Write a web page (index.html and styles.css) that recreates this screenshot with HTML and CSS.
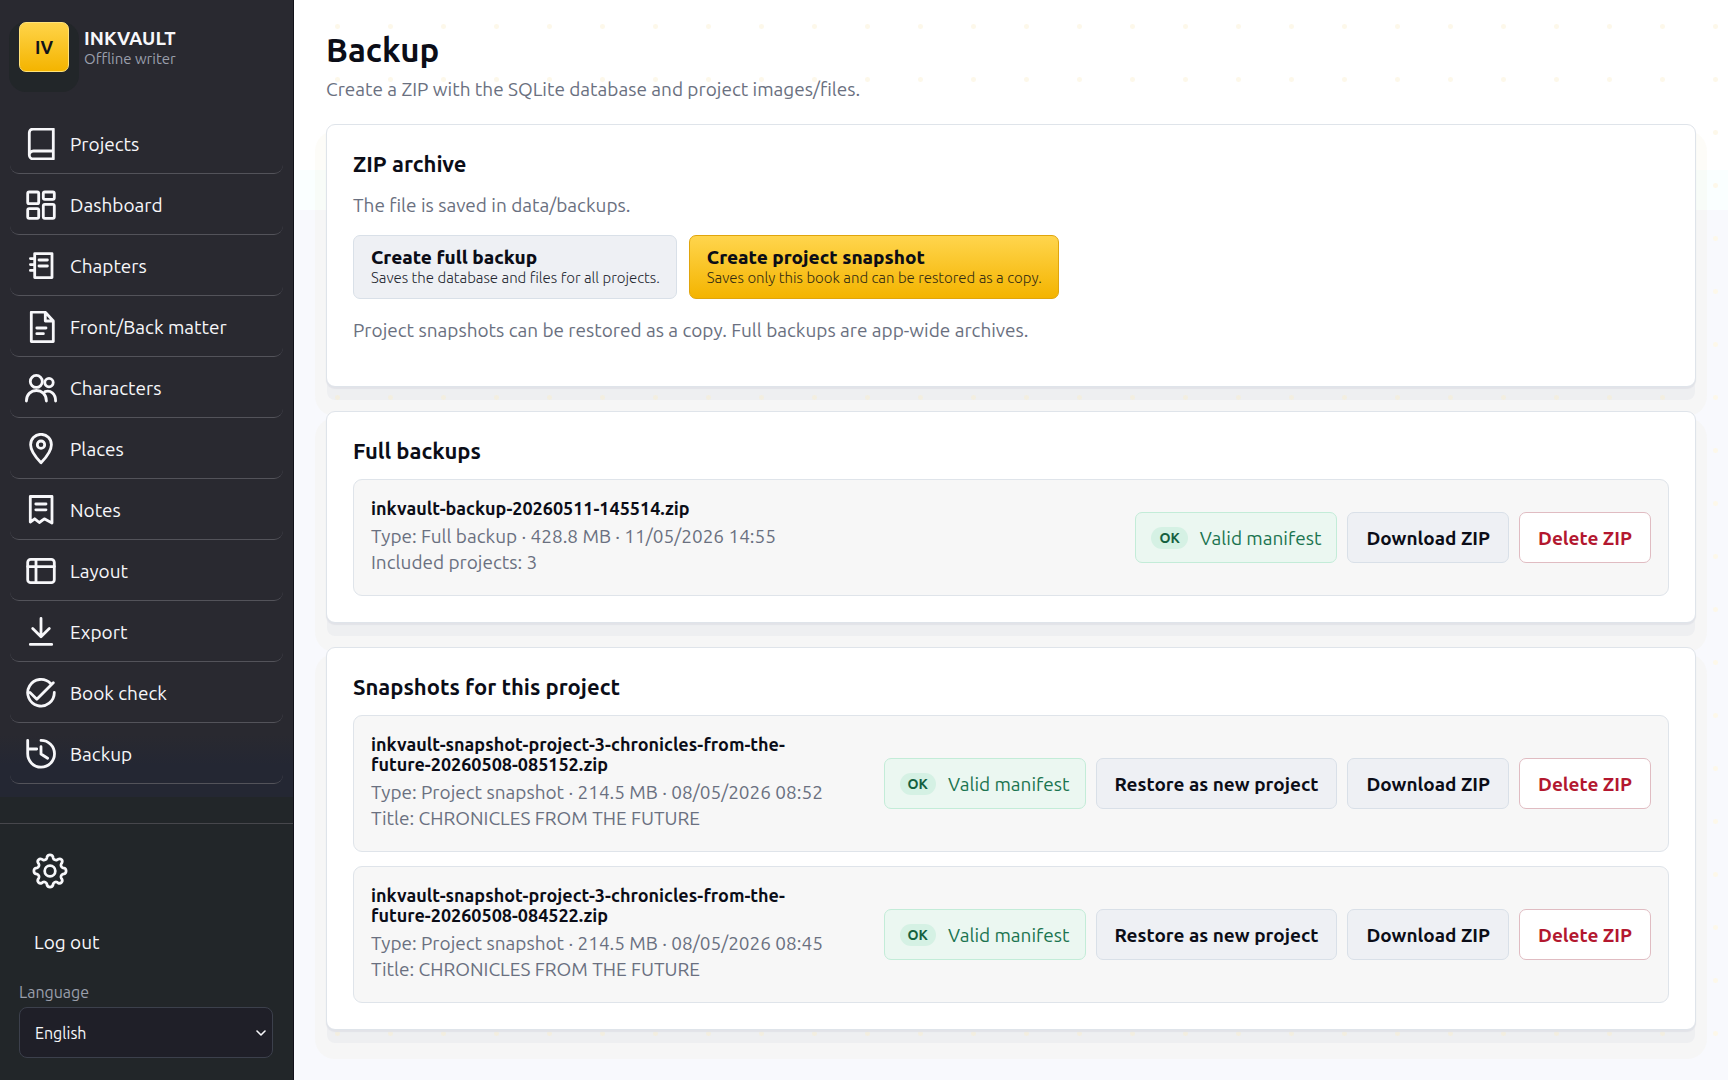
FILE: index.html
```html
<!DOCTYPE html>
<html lang="en">
<head>
<meta charset="utf-8">
<meta name="viewport" content="width=device-width, initial-scale=1">
<title>Backup · INKVAULT</title>
<link rel="stylesheet" href="styles.css">
</head>
<body>
<div class="app">
  <aside class="sidebar">
    <div class="brand">
      <span class="brand-mark">IV</span>
      <span class="brand-text"><strong>INKVAULT</strong><span>Offline writer</span></span>
    </div>
    <nav class="nav" aria-label="Main">
      <a href="#projects"><svg viewBox="0 0 32 32"><path d="M28.3 1H8a3.7 3.7 0 0 0-3.7 3.7V27a4 4 0 0 0 4 4h20zM4.3 27a4 4 0 0 1 4-4h20"/></svg>Projects</a>
      <a href="#dashboard"><svg viewBox="0 0 32 32"><rect x="2.7" y="3" width="11" height="11.7" rx="1.5"/><rect x="18.3" y="3" width="11" height="7.3" rx="1.5"/><rect x="2.7" y="19.7" width="11" height="9.6" rx="1.5"/><rect x="18.3" y="15.3" width="11" height="14" rx="1.5"/></svg>Dashboard</a>
      <a href="#chapters"><svg viewBox="0 0 32 32"><path d="M9.7 3.6H27v24H9.7zM5.4 8.6h4.3M5.4 14.6h4.3M5.4 20.4h4.3M14 10h8.4M14 16h8.4"/></svg>Chapters</a>
      <a href="#matter"><svg viewBox="0 0 32 32"><path d="M6.3 1.2h14l8 8.8v20.6h-22zM20.3 1.2V10h8M11.8 17H21M11.8 22.7h6.6"/></svg>Front/Back matter</a>
      <a href="#characters"><svg viewBox="0 0 32 32"><circle cx="11.3" cy="9.4" r="6"/><circle cx="24" cy="10.6" r="4.2"/><path d="M1.4 29c0-14 20-14 20 0M20 19.6c5.5-1.6 10.6 2 10.6 9.4"/></svg>Characters</a>
      <a href="#places"><svg viewBox="0 0 32 32"><path d="M16 29.8C9 22.5 5.6 17 5.6 11.7a10.4 10.4 0 0 1 20.8 0C26.4 17 23 22.5 16 29.8z"/><circle cx="16" cy="11.7" r="3.7"/></svg>Places</a>
      <a href="#notes"><svg viewBox="0 0 32 32"><path d="M5.3 2.5H27V29l-7.7-4.2-5 3.7-4.6-3.7L5.3 28zM10.8 10H21M10.8 15.8H21"/></svg>Notes</a>
      <a href="#layout"><svg viewBox="0 0 32 32"><rect x="2.7" y="4.3" width="26.6" height="23.4" rx="3"/><path d="M2.7 11.6h26.6M11 4.3v23.4"/></svg>Layout</a>
      <a href="#export"><svg viewBox="0 0 32 32"><path d="M16 2.4v18.4M7.7 12.6l8.3 8.2 8.3-8.2M5.3 28.4h21.4"/></svg>Export</a>
      <a href="#check"><svg viewBox="0 0 32 32"><path d="M29.3 15.5A13.3 13.3 0 1 1 25.6 6.5M5 15.6l6.8 6.6L28.3 5.7"/></svg>Book check</a>
      <a href="#backup" aria-current="page"><svg viewBox="0 0 32 32"><path d="M16 2.4A13.4 13.4 0 1 1 2.7 15.6V2.4M2.7 11h9M16 8.7V16l6.6 4.2"/></svg>Backup</a>
    </nav>
    <div class="sidebar-foot">
      <a class="gear" href="#settings" aria-label="Settings"><svg viewBox="0 0 16 16"><circle cx="8" cy="8" r="2.5"/><path d="M9.4 1.4c-.4-1.3-2.4-1.3-2.8 0l-.1.5a1.33 1.33 0 0 1-1.9.8l-.4-.2c-1.2-.7-2.4.6-1.8 1.7l.3.4a1.33 1.33 0 0 1-.8 1.9l-.5.1c-1.3.4-1.3 2.4 0 2.8l.5.1a1.33 1.33 0 0 1 .8 1.9l-.3.4c-.6 1.2.6 2.4 1.8 1.8l.4-.3a1.33 1.33 0 0 1 1.9.8l.1.5c.4 1.3 2.4 1.3 2.8 0l.1-.5a1.33 1.33 0 0 1 1.9-.8l.4.3c1.2.6 2.4-.6 1.8-1.8l-.3-.4a1.33 1.33 0 0 1 .8-1.9l.5-.1c1.3-.4 1.3-2.4 0-2.8l-.5-.1a1.33 1.33 0 0 1-.8-1.9l.3-.4c.6-1.2-.6-2.4-1.8-1.7l-.4.2a1.33 1.33 0 0 1-1.9-.8z"/></svg></a>
      <button class="logout" type="button">Log out</button>
      <label for="language">Language</label>
      <div class="select">
        <select id="language"><option>English</option></select>
        <svg viewBox="0 0 10 8"><path d="M1 2l4 4 4-4"/></svg>
      </div>
    </div>
  </aside>

  <main class="main">
    <header class="page-head">
      <h1>Backup</h1>
      <p>Create a ZIP with the SQLite database and project images/files.</p>
    </header>

    <section class="card">
      <h2>ZIP archive</h2>
      <p>The file is saved in data/backups.</p>
      <div class="create">
        <button class="btn btn-tall" type="button"><strong>Create full backup</strong><span>Saves the database and files for all projects.</span></button>
        <button class="btn btn-tall btn-gold" type="button"><strong>Create project snapshot</strong><span>Saves only this book and can be restored as a copy.</span></button>
      </div>
      <p class="hint">Project snapshots can be restored as a copy. Full backups are app-wide archives.</p>
    </section>

    <section class="card">
      <h2>Full backups</h2>
      <article class="row">
        <div class="info">
          <h3>inkvault-backup-20260511-145514.zip</h3>
          <p>Type: Full backup · 428.8 MB · 11/05/2026 14:55</p>
          <p>Included projects: 3</p>
        </div>
        <div class="actions">
          <span class="valid"><b>OK</b>Valid manifest</span>
          <a class="btn" href="#download">Download ZIP</a>
          <button class="btn btn-danger" type="button">Delete ZIP</button>
        </div>
      </article>
    </section>

    <section class="card">
      <h2>Snapshots for this project</h2>
      <div class="rows">
        <article class="row">
          <div class="info">
            <h3>inkvault-snapshot-project-3-chronicles-from-the-future-20260508-085152.zip</h3>
            <p>Type: Project snapshot · 214.5 MB · 08/05/2026 08:52</p>
            <p>Title: CHRONICLES FROM THE FUTURE</p>
          </div>
          <div class="actions">
            <span class="valid"><b>OK</b>Valid manifest</span>
            <button class="btn" type="button">Restore as new project</button>
            <a class="btn" href="#download">Download ZIP</a>
            <button class="btn btn-danger" type="button">Delete ZIP</button>
          </div>
        </article>
        <article class="row">
          <div class="info">
            <h3>inkvault-snapshot-project-3-chronicles-from-the-future-20260508-084522.zip</h3>
            <p>Type: Project snapshot · 214.5 MB · 08/05/2026 08:45</p>
            <p>Title: CHRONICLES FROM THE FUTURE</p>
          </div>
          <div class="actions">
            <span class="valid"><b>OK</b>Valid manifest</span>
            <button class="btn" type="button">Restore as new project</button>
            <a class="btn" href="#download">Download ZIP</a>
            <button class="btn btn-danger" type="button">Delete ZIP</button>
          </div>
        </article>
      </div>
    </section>
  </main>
</div>
</body>
</html>
```
FILE: styles.css
```css
* { box-sizing: border-box; }

body {
  margin: 0;
  font: 400 19px/26px Ubuntu, "Open Sans", sans-serif;
  color: #0b0d17;
}

h1, h2, h3, p { margin: 0; }
a { color: inherit; text-decoration: none; }
button, select { font: inherit; color: inherit; cursor: pointer; }
svg { fill: none; stroke: currentColor; stroke-linecap: round; stroke-linejoin: round; flex: none; }

.app {
  display: grid;
  grid-template-columns: 294px 1fr;
  min-height: 100vh;
}

/* Sidebar */
.sidebar {
  display: flex;
  flex-direction: column;
  color: #f7f7fa;
  background: linear-gradient(#292930 0 735px, #242733 765px 797px, #222629 797px);
  border-right: 1px solid #12121a;
  box-shadow: 1px 0 0 #b9b9be;
}

.brand {
  display: flex;
  align-items: center;
  gap: 15px;
  padding: 22px 19px;
}
.brand-mark {
  display: grid;
  place-items: center;
  width: 50px;
  height: 50px;
  border-radius: 7px;
  border: 1px solid #ffe27a;
  background: linear-gradient(#ffd449, #f4b400);
  color: #12121a;
  font-weight: 700;
  font-size: 18px;
  box-shadow: 0 10px 0 10px #222629;
}
.brand-text { display: flex; flex-direction: column; padding-top: 2px; line-height: 21px; }
.brand-text span { font-size: 15px; color: #9a9fac; line-height: 20px; }

.nav {
  display: flex;
  flex-direction: column;
  gap: 1px;
  padding: 20px 10px 0;
}
.nav a {
  display: flex;
  align-items: center;
  gap: 13px;
  height: 60px;
  padding: 0 15px;
  border-bottom: 1px solid #53535a;
  border-radius: 9px;
}
.nav svg { width: 32px; height: 32px; stroke-width: 2.8; }

.sidebar-foot {
  display: flex;
  flex-direction: column;
  margin-top: auto;
  padding: 23px 20px 22px 19px;
  border-top: 1px solid #47474c;
}
.gear { display: flex; align-items: center; height: 48px; padding-left: 14px; }
.gear svg { width: 34px; height: 34px; overflow: visible; stroke-width: 1.3; }
.logout {
  margin: 22px 0 15px;
  height: 50px;
  padding: 0 15px;
  border: 0;
  background: none;
  text-align: left;
}
.sidebar-foot label { font-size: 16px; line-height: 20px; color: #9a9fac; }
.select { display: grid; align-items: center; margin-top: 5px; }
.select > * { grid-area: 1 / 1; }
.select select {
  appearance: none;
  width: 100%;
  height: 51px;
  padding: 0 15px;
  border: 1px solid #3c404c;
  border-radius: 8px;
  background: #1f1f28;
  font-size: 16px;
}
.select svg { width: 10px; height: 8px; justify-self: end; margin-right: 7px; stroke-width: 1.6; pointer-events: none; }

/* Page */
.main {
  display: flex;
  flex-direction: column;
  gap: 24px;
  padding: 31px 32px 48px;
  background:
    radial-gradient(circle, #fdf8ea 2px, transparent 3px) right -14px top 0 / 53px 53px,
    linear-gradient(#fff 0 170px, #faffff 170px 210px, #f8f9fd 210px);
}
.page-head { display: flex; flex-direction: column; gap: 7px; margin-bottom: -2px; }
h1 { font-size: 33px; line-height: 38px; font-weight: 600; }
p { color: #6a7080; }

.card {
  padding: 26px;
  border: 1px solid #dfe4ea;
  border-radius: 9px;
  background: #fff;
  box-shadow:
    0 2px 1px #e2e3e8,
    0 14px 0 -1px rgba(100, 120, 160, .05),
    0 18px 0 11px rgba(225, 215, 165, .08);
}
h2 { font-size: 22px; line-height: 26px; font-weight: 600; margin-bottom: 15px; }
.create { display: flex; gap: 12px; margin: 17px 0 18px; }
.hint { margin-bottom: 17px; }

.btn {
  display: inline-flex;
  align-items: center;
  justify-content: center;
  min-height: 51px;
  padding: 0 18px;
  border: 1px solid #d9e0e8;
  border-radius: 7px;
  background: #eef0f4;
  font-weight: 700;
  white-space: nowrap;
}
.btn-tall {
  flex-direction: column;
  align-items: flex-start;
  min-height: 64px;
  padding: 0 16px 0 17px;
  line-height: 21px;
}
.btn-tall span { font-size: 15px; line-height: 19px; font-weight: 300; color: #22252e; }
.btn-gold { border-color: #e0a50c; background: linear-gradient(#ffd54d, #f4b400); }
.btn-gold span { color: #332b12; }
.btn-danger { border-color: #e0bcc2; background: #fff; color: #b3172f; }

.rows { display: flex; flex-direction: column; gap: 14px; }
.row {
  display: flex;
  align-items: center;
  justify-content: space-between;
  gap: 18px;
  padding: 18px 17px;
  border: 1px solid #dfe4ea;
  border-radius: 9px;
  background: #f7f7f7;
}
.info { max-width: 464px; padding-bottom: 2px; }
h3 { font-size: 18px; line-height: 20px; font-weight: 600; margin-bottom: 5px; }
.actions { display: flex; gap: 10px; flex: none; }
.valid {
  display: inline-flex;
  align-items: center;
  gap: 12px;
  height: 51px;
  padding: 0 15px;
  border: 1px solid #c3ecd8;
  border-radius: 7px;
  background: #ebf7f1;
  color: #1b7450;
  white-space: nowrap;
}
.valid b {
  padding: 0 8px;
  border-radius: 11px;
  background: #d5f1e4;
  color: #14603f;
  font-size: 14px;
  line-height: 22px;
}
```
